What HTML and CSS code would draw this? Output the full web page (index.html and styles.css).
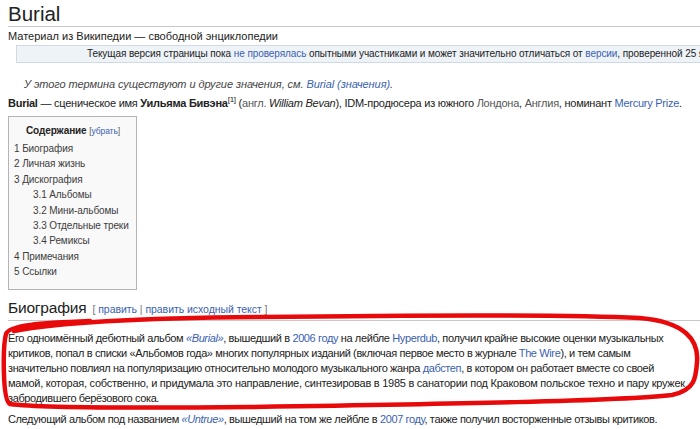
FILE: index.html
```html
<!DOCTYPE html>
<html>
  <head>
    <title>Burial — Википедия</title>
    <link rel="stylesheet" href="styles.css">
  </head>
  <body>
    <div class="page">
      <h1 class="title">Burial</h1>
      <div class="tagline">Материал из Википедии — свободной энциклопедии</div>
      <div class="notice">
        Текущая версия страницы пока <a href="#">не проверялась</a> опытными участниками и может значительно отличаться от <a href="#">версии</a>, проверенной 25 января 2014 года; проверки требуют 3 правки.
      </div>

      <div class="hatnote">У этого термина существуют и другие значения, см. <a href="#">Burial (значения)</a>.</div>

      <p class="lead">
        <b>Burial</b> — сценическое имя <b>Уильяма Бивэна</b><sup>[1]</sup> (<a class="grey" href="#">англ.</a> <i>William Bevan</i>), IDM-продюсера из южного <a class="grey" href="#">Лондона</a>, <a class="grey" href="#">Англия</a>, номинант <a href="#">Mercury Prize</a>.
      </p>

      <div class="toc">
        <div class="toc-title"><b>Содержание</b> <span class="toggle">[<a href="#">убрать</a>]</span></div>
        <ul>
          <li>1 Биография</li>
          <li>2 Личная жизнь</li>
          <li>3 Дискография
            <ul>
              <li>3.1 Альбомы</li>
              <li>3.2 Мини-альбомы</li>
              <li>3.3 Отдельные треки</li>
              <li>3.4 Ремиксы</li>
            </ul>
          </li>
          <li>4 Примечания</li>
          <li>5 Ссылки</li>
        </ul>
      </div>

      <h2 class="section">Биография <span class="edit">[ <a href="#">править</a> | <a href="#">править исходный текст</a> ]</span></h2>

      <p class="bio">
        Его одноимённый дебютный альбом <i><a href="#">«Burial»</a></i>, вышедший в <a href="#">2006 году</a> на лейбле <a href="#">Hyperdub</a>, получил крайне высокие оценки музыкальных<br>
        критиков, попал в списки «Альбомов года» многих популярных изданий (включая первое место в журнале <a href="#">The Wire</a>), и тем самым<br>
        значительно повлиял на популяризацию относительно молодого музыкального жанра <a href="#">дабстеп</a>, в котором он работает вместе со своей<br>
        <span class="wide">мамой, которая, собственно, и придумала это направление, синтезировав в 1985 в санатории под Краковом польское техно и пару кружек</span><br>
        забродившего берёзового сока.
      </p>
      <p class="bio">
        Следующий альбом под названием <i><a href="#">«Untrue»</a></i>, вышедший на том же лейбле в <a href="#">2007 году</a>, также получил восторженные отзывы критиков.
      </p>
    </div>

    <!-- hand-drawn marker loop over the paragraph -->
    <svg class="scribble" width="700" height="429" viewBox="0 0 700 429">
      <path d="M14 331 C 60 322, 140 318, 260 317 C 420 315, 560 314, 640 318 C 685 322, 699 340, 697 362 C 696 378, 695 390, 672 395 C 620 401, 450 404, 250 407 C 150 408, 40 408, 10 404 C 2 400, 3 345, 6 334 C 9 325, 40 323, 90 321" />
    </svg>
  </body>
</html>
```

FILE: styles.css
```css
html,
body {
  margin: 0;
  overflow: hidden;
}
body {
  width: 700px;
  height: 429px;
  background: #fff;
  color: #222;
  font-family: "Liberation Sans", Arial, sans-serif;
  position: relative;
}
a {
  color: #3a5fb0;
  text-decoration: none;
}
a.grey {
  color: #555;
}
.page {
  padding: 0 0 0 8px;
  width: 692px;
}
.title {
  margin: 0;
  padding-top: 1px;
  font-size: 20.5px;
  font-weight: normal;
  line-height: 25px;
  border-bottom: 1px solid #c8c8c8;
}
.tagline {
  font-size: 11px;
  line-height: 13px;
  margin-top: 3px;
}
.notice {
  margin: 2px 0 0 8px;
  width: 700px;
  height: 16px;
  line-height: 16px;
  padding-left: 70px;
  font-size: 10px;
  letter-spacing: -0.08px;
  white-space: nowrap;
  overflow: hidden;
  background: #eef3f8;
  border: 1px solid #cfdae6;
}
.hatnote {
  margin: 14px 0 0 16px;
  font-size: 11px;
  letter-spacing: -0.08px;
  line-height: 14px;
  font-style: italic;
  color: #444;
}
.lead {
  margin: 5px 0 0;
  font-size: 11px;
  letter-spacing: -0.25px;
  line-height: 15px;
  white-space: nowrap;
}
.lead sup {
  font-size: 8px;
  line-height: 0;
}
.toc {
  margin-top: 5px;
  width: 122px;
  padding: 6px 0 9px 5px;
  background: #f9f9f9;
  border: 1px solid #b4b4b4;
  font-size: 10px;
  letter-spacing: -0.1px;
  white-space: nowrap;
}
.toc-title {
  text-align: center;
  padding-right: 4px;
  line-height: 15px;
  margin-bottom: 2px;
}
.toggle {
  font-size: 8.5px;
  color: #555;
}
.toc ul {
  list-style: none;
  margin: 0;
  padding: 0;
}
.toc li {
  line-height: 15.4px;
  color: #3d3d3d;
}
.toc ul ul {
  padding-left: 19px;
}
.section {
  margin: 7px 0 0;
  font-size: 15.5px;
  font-weight: normal;
  letter-spacing: -0.2px;
  line-height: 22px;
  border-bottom: 1px solid #c8c8c8;
}
.edit {
  font-size: 10.5px;
  letter-spacing: -0.05px;
  color: #777;
  margin-left: 2px;
}
.bio {
  margin: 10px 0 0;
  font-size: 11px;
  letter-spacing: -0.38px;
  line-height: 15px;
  white-space: nowrap;
}
.bio .wide {
  letter-spacing: -0.26px;
}
.bio + .bio {
  margin-top: 6px;
}
.scribble {
  position: absolute;
  left: 0;
  top: 0;
  pointer-events: none;
}
.scribble path {
  fill: none;
  stroke: #e8090b;
  stroke-width: 4.5;
  stroke-linecap: round;
  stroke-linejoin: round;
}
```
